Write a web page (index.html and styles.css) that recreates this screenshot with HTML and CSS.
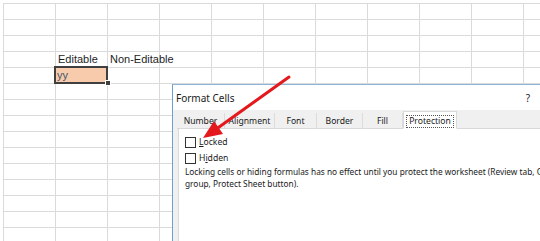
FILE: index.html
```html
<!DOCTYPE html>
<html lang="en">
<head>
<meta charset="utf-8">
<title>Format Cells - Protection</title>
<link rel="stylesheet" href="styles.css">
</head>
<body>
<div class="sheet">
  <div class="cell head-editable">Editable</div>
  <div class="cell head-noneditable">Non-Editable</div>
  <div class="cell input">yy<span class="handle"></span></div>
</div>

<div class="dialog">
  <div class="titlebar">
    <span class="title">Format Cells</span>
    <span class="help">?</span>
  </div>
  <div class="tabs">
    <div class="tab tab-number">Number</div>
    <div class="tab tab-alignment">Alignment</div>
    <div class="tab tab-font">Font</div>
    <div class="tab tab-border">Border</div>
    <div class="tab tab-fill">Fill</div>
    <div class="tab tab-protection active"><span class="focus">Protection</span></div>
  </div>
  <div class="panel">
    <label class="check"><span class="box"></span><span><u>L</u>ocked</span></label>
    <label class="check"><span class="box"></span><span>H<u>i</u>dden</span></label>
    <p class="note">Locking cells or hiding formulas has no effect until you protect the worksheet (Review tab, Changes<br>group, Protect Sheet button).</p>
  </div>
</div>

<svg class="arrow" width="540" height="241" viewBox="0 0 540 241">
  <line x1="289" y1="77" x2="217" y2="128.5" stroke="#e3191e" stroke-width="3" stroke-linecap="round"/>
  <polygon points="203,138 223,134 214,121" fill="#e3191e"/>
</svg>
</body>
</html>
```
FILE: styles.css
```css
html, body {
  margin: 0;
  padding: 0;
  overflow: hidden;
}
body {
  width: 540px;
  height: 241px;
  background: #ffffff;
  position: relative;
  font-family: "Liberation Sans", Arial, sans-serif;
}

/* worksheet */
.sheet {
  margin: 3px 0 0 3px;
  width: 537px;
  height: 238px;
  overflow: hidden;
  display: grid;
  grid-template-columns: repeat(11, 52px);
  grid-template-rows: repeat(15, 16px);
  background-image:
    linear-gradient(to right, #dadada 1px, transparent 1px),
    linear-gradient(to bottom, #dadada 1px, transparent 1px);
  background-size: 52px 16px;
}
.cell {
  font-size: 11px;
  line-height: 16px;
  padding-left: 3px;
  color: #1e1e1e;
  white-space: nowrap;
}
.head-editable {
  grid-column: 2;
  grid-row: 4;
}
.head-noneditable {
  grid-column: 3;
  grid-row: 4;
}
.input {
  grid-column: 2;
  grid-row: 5;
  position: relative;
  background: #f8cbad;
  outline: 2px solid #3f3f3f;
  outline-offset: -1px;
  color: #44546a;
  padding-left: 2px;
}
.handle {
  position: absolute;
  right: -4px;
  bottom: -3px;
  width: 4px;
  height: 4px;
  background: #3f3f3f;
  border: 1px solid #ffffff;
}

/* dialog */
.dialog {
  position: absolute;
  left: 172px;
  top: 84px;
  width: 367px;
  height: 156px;
  overflow: hidden;
  background: #f0f0f0;
  border-top: 1px solid #8fb4d9;
  border-left: 1px solid #6f9fce;
  font-family: "Noto Sans", "Open Sans", sans-serif;
  color: #1a1a1a;
}
.titlebar {
  height: 25px;
  background: #ffffff;
  display: flex;
  align-items: center;
  padding-left: 3px;
  padding-right: 10px;
}
.title {
  flex: 1;
  font-size: 10px;
}
.help {
  font-size: 10px;
}
.tabs {
  display: flex;
  align-items: flex-end;
  height: 19px;
  padding-left: 4px;
  position: relative;
  z-index: 1;
}
.tab {
  height: 16px;
  font-size: 8.6px;
  line-height: 16px;
  text-align: center;
  box-sizing: border-box;
  border-right: 1px solid #dcdcdc;
  border-bottom: 1px solid #d9d9d9;
  white-space: nowrap;
}
.tab-number { width: 48px; }
.tab-alignment { width: 50px; }
.tab-font { width: 42px; }
.tab-border { width: 46px; }
.tab-fill { width: 40px; }
.tab-protection { width: 54px; }
.tab.active {
  height: 18px;
  background: #ffffff;
  border: 1px solid #d9d9d9;
  border-bottom: 1px solid #ffffff;
  line-height: 16px;
  padding-top: 1px;
}
.focus {
  display: inline-block;
  line-height: 11px;
  padding: 0 2px;
  outline: 1px dotted #555555;
}
.panel {
  height: 112px;
  overflow: hidden;
  margin-left: 5px;
  margin-top: -1px;
  background: #ffffff;
  border-top: 1px solid #d9d9d9;
  border-left: 1px solid #d9d9d9;
  padding: 5px 0 0 6px;
  font-size: 8.6px;
}
.check {
  display: flex;
  align-items: center;
  height: 16px;
  line-height: 16px;
}
.box {
  width: 9px;
  height: 9px;
  border: 1px solid #333333;
  background: #ffffff;
  margin-right: 3px;
}
.note {
  margin: 0;
  font-size: 8.3px;
  line-height: 12px;
  white-space: nowrap;
}

/* annotation */
.arrow {
  position: absolute;
  left: 0;
  top: 0;
  pointer-events: none;
  z-index: 5;
}
```
